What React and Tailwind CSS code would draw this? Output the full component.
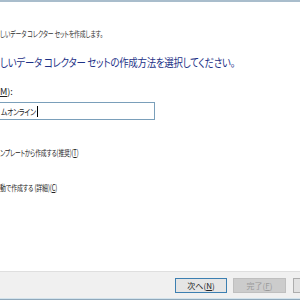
import React from 'react';

const jp = "font-['Meiryo_UI','Noto_Sans_CJK_JP',sans-serif] [font-feature-settings:'palt']";

export default function App() {
    return (
        <div className={`w-[300px] h-[300px] overflow-hidden bg-white flex flex-col ${jp}`}>
            <div className="h-[2px] bg-[#a9bdcc]" />

            {/* Body */}
            <div className="flex-1 flex flex-col items-start">
                <p className="mt-[25px] h-[12px] text-[8.5px] leading-[12px] text-[#333] tracking-[-0.2px] whitespace-nowrap origin-left scale-x-[0.69]">
                    しいデータ コレクター セットを作成します。
                </p>
                <h1 className="mt-[15px] h-[16px] text-[11.5px] leading-[16px] text-[#1e3287] tracking-[-0.3px] whitespace-nowrap origin-left scale-x-[0.82]">
                    しいデータ コレクター セットの作成方法を選択してください。
                </h1>
                <label className="mt-[16px] h-[12px] text-[9px] leading-[12px] text-[#222] whitespace-nowrap">
                    <span className="underline">M</span>):
                </label>
                <div className="mt-[4px] w-[157px] h-[18px] border border-[#7a9fba] -ml-[2px] pl-[2px] flex items-center">
                    <span className="text-[8.5px] leading-[12px] text-[#222] tracking-[-0.2px] whitespace-nowrap origin-left scale-x-[0.78] inline-block w-[36px]">ムオンライン</span>
                    <span className="w-px h-[11px] bg-black" />
                </div>
                <p className="mt-[26px] h-[12px] text-[8.5px] leading-[12px] text-[#222] tracking-[-0.2px] whitespace-nowrap origin-left scale-x-[0.68]">
                    ンプレートから作成する(推奨)(<span className="underline">T</span>)
                </p>
                <p className="mt-[23px] h-[12px] text-[8.5px] leading-[12px] text-[#222] tracking-[-0.2px] whitespace-nowrap origin-left scale-x-[0.7]">
                    動で作成する (詳細)(<span className="underline">C</span>)
                </p>
            </div>

            {/* Footer */}
            <div className="h-[27px] bg-[#f0f0f0] border-t border-[#dfdfdf] flex items-center pl-[175px] gap-[6px]">
                <button className="w-[52px] h-[15px] shrink-0 border border-[#3c7fb1] bg-[#e5e5e5] text-[8px] leading-[13px] text-[#222]">
                    次へ(<span className="underline">N</span>)
                </button>
                <button className="w-[53px] h-[15px] shrink-0 border border-[#bfbfbf] bg-[#cccccc] text-[8px] leading-[13px] text-[#9a9a9a]">
                    完了(<span className="underline">F</span>)
                </button>
                <button className="w-[53px] h-[15px] shrink-0 border border-[#adadad] bg-[#e1e1e1] ml-[1px]" />
            </div>
            <div className="h-px bg-[#d3e3ec]" />
            <div className="h-px bg-[#8fa8bb]" />
        </div>
    );
}
